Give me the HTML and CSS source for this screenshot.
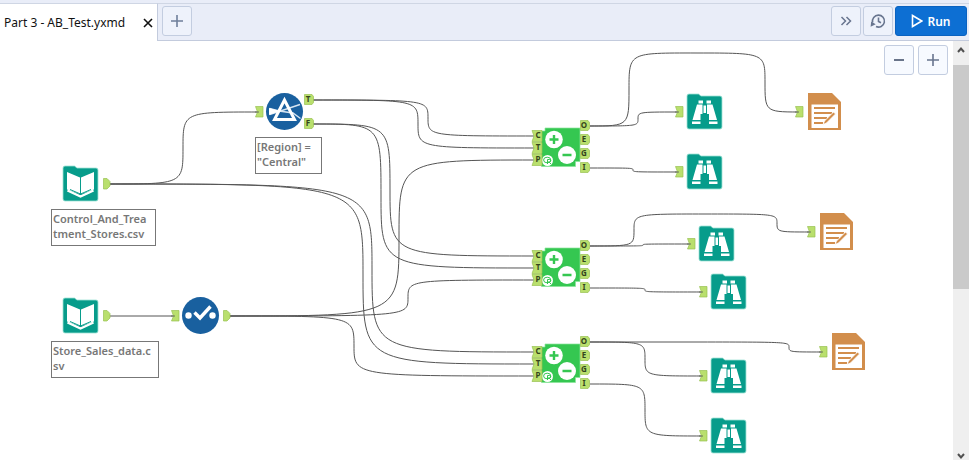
FILE: index.html
```html
<!DOCTYPE html>
<html lang="en">
<head>
<meta charset="utf-8">
<title>Part 3 - AB_Test.yxmd</title>
<link rel="stylesheet" href="styles.css">
</head>
<body>
<header class="bar">
  <div class="tab">
    <span class="tab-name">Part 3 - AB_Test.yxmd</span>
    <button class="close" type="button" aria-label="Close tab"><svg width="10" height="10" viewBox="0 0 10 10"><path d="M1 1L9 9M9 1L1 9" stroke="#111" stroke-width="1.6"/></svg></button>
  </div>
  <div class="tools">
    <button class="btn" type="button" aria-label="New tab"><svg width="14" height="14" viewBox="0 0 14 14"><path d="M7 1V13M1 7H13" stroke="#6f7f9b" stroke-width="1.6"/></svg></button>
    <span class="space"></span>
    <button class="btn" type="button" aria-label="More"><svg width="12" height="10" viewBox="0 0 12 10"><path d="M1.500 1L5.500 5L1.500 9M6.500 1L10.500 5L6.500 9" fill="none" stroke="#68758f" stroke-width="1.5"/></svg></button>
    <button class="btn" type="button" aria-label="History"><svg width="16" height="16" viewBox="0 0 16 16"><path d="M2.600 9.500A6 6 0 1 1 6 13.600M8.500 4.500V8.500L11 9.800" fill="none" stroke="#68758f" stroke-width="1.6"/><path d="M.6 13.700L1.200 8.600L5.700 11.300Z" fill="#68758f"/></svg></button>
    <button class="run" type="button"><svg width="12" height="14" viewBox="0 0 12 14"><path d="M1.500 1.500L10.800 7L1.500 12.500Z" fill="none" stroke="#fff" stroke-width="1.6"/></svg>Run</button>
  </div>
</header>
<div class="work">
  <main class="canvas">
    <svg class="flow" width="953" height="419" viewBox="0 41 953 419">
      <defs>
        <symbol id="in" viewBox="0 0 9 12" overflow="visible"><path d="M.5 .5H8V11H.5L2.500 6Z" fill="#b9df6d" stroke="#98c152" stroke-width=".7"/><path d="M0 6H4" stroke="#68735a"/></symbol>
        <symbol id="out" viewBox="0 0 8 12" overflow="visible"><path d="M.5 .5H4L7 3.500V8L4 11H.5Z" fill="#b9df6d" stroke="#98c152" stroke-width=".7"/></symbol>
        <symbol id="port" viewBox="0 0 10 11"><path d="M.5 .5H8L9.500 2.500V8.500L8 10.500H.5Z" fill="#b9df6d" stroke="#98c152" stroke-width=".7"/></symbol>
        <symbol id="folder" viewBox="0 0 37 37"><path d="M3 1H12.500L15 3H34Q36 3 36 5V34Q36 36 34 36H3Q1 36 1 34V3Q1 1 3 1Z" fill="#079c8b" stroke="#9fe3d6" stroke-width=".8"/></symbol>
        <symbol id="book" viewBox="0 0 37 37"><use href="#folder" width="37" height="37"/><path d="M5 7L18 12.500V29L5 24.500ZM32 7L19 12.500V29L32 24.500Z" fill="#fff"/><path d="M5.500 25.500L18.500 31.500L31.500 25.500" fill="none" stroke="#fff" stroke-width="2.400"/><path d="M8 24.500L18.500 29L29 24.500M18.500 12V29" fill="none" stroke="#079c8b" stroke-width="1"/></symbol>
        <symbol id="browse" viewBox="0 0 37 37"><use href="#folder" width="37" height="37"/><path d="M12.500 7.500H17V10.500H12.500ZM20.500 7.500H25V10.500H20.500ZM11 11.500H16.500V21H14.500V27H6.500ZM21 11.500H26.500L31 27H23V21H21ZM17.500 12.500H20V20H17.500ZM6 28.500H14.500V31H6ZM23 28.500H31.500V31H23Z" fill="#fff"/></symbol>
        <symbol id="report" viewBox="0 0 34 38"><path d="M0 0H24L33 9V37H0Z" fill="#d28e4c"/><path d="M3.500 11.500H30V35H3.500Z" fill="#fff"/><path d="M6 15H27M6 20H24M6 25H19M6 30H15" stroke="#d28e4c" stroke-width="2.200"/><path d="M15 31.500L16.500 28L25.500 19L27.500 21L18.500 30Z" fill="#d28e4c" stroke="#fff" stroke-width=".8"/></symbol>
        <g id="macro">
          <path d="M545 128H580V161.500H575.500V166.500H541.500V131H545Z" fill="#35c751" stroke="#8be59b" stroke-width=".7"/>
          <circle cx="554" cy="139.500" r="8.800" fill="#fff"/><circle cx="567" cy="155" r="9" fill="#fff"/>
          <path d="M549.500 139.500H558.500M554 135V144M562.500 155H571.500" stroke="#35c751" stroke-width="2.400"/>
          <circle cx="547.500" cy="160.500" r="5.500" fill="#fff"/>
          <ellipse cx="547.200" cy="160" rx="3.600" ry="2.800" fill="none" stroke="#35c751"/>
          <path d="M547.500 164V159.500H549.500A1.200 1.200 0 0 1 549.500 162H547.500M549 162L551 164" fill="none" stroke="#35c751"/>
          <g fill="#b9df6d" stroke="#98c152" stroke-width=".7"><path d="M532 130.500H542V141.500H532L534 136Z"/><path d="M532 142.500H542V153.500H532L534 148Z"/><path d="M532 154.500H542V165.500H532L534 160Z"/></g>
          <use href="#port" x="580" y="120" width="10" height="11"/><use href="#port" x="580" y="134" width="10" height="11"/><use href="#port" x="580" y="148" width="10" height="11"/><use href="#port" x="580" y="162" width="10" height="11"/>
        </g>
      </defs>
      <g class="wires">
        <path d="M109 184C183 184 183 184 183 148S183 112 258 112"/>
        <path d="M313 100C428 100 428 100 428 118S428 136 535 136"/>
        <path d="M313 100C418 100 418 100 418 124S418 148 535 148"/>
        <path d="M313 124C390 124 390 124 390 190S390 256 535 256"/>
        <path d="M313 124C381 124 381 124 381 196S381 268 535 268"/>
        <path d="M109 184C372 184 372 184 372 268S372 352 535 352"/>
        <path d="M109 184C363 184 363 184 363 274S363 364 535 364"/>
        <path d="M230 316C399 316 399 316 399 238S399 160 535 160"/>
        <path d="M230 316C408 316 408 316 408 298S408 280 535 280"/>
        <path d="M230 316C354 316 354 316 354 346S354 376 535 376"/>
        <path d="M109 316H174"/>
        <path d="M590 126C638 126 638 126 638 119S638 112 678 112"/>
        <path d="M590 126C629 126 629 126 629 89S629 53 697 53S765 53 765 82S765 112 798 112"/>
        <path d="M590 168C633 168 633 168 633 170S633 172 678 172"/>
        <path d="M590 246C643 246 643 246 643 245S643 244 690 244"/>
        <path d="M590 246C634 246 634 246 634 230S634 214 705 214S777 214 777 223S777 232 810 232"/>
        <path d="M590 288C645 288 645 288 645 290S645 292 702 292"/>
        <path d="M590 342C645 342 645 342 645 359S645 376 702 376"/>
        <path d="M590 342H690C789 342 789 342 789 347S789 352 822 352"/>
        <path d="M590 384C645 384 645 384 645 410S645 436 702 436"/>
      </g>
      <use href="#book" x="62" y="165" width="37" height="37"/><use href="#out" x="103" y="178" width="8" height="12"/>
      <use href="#book" x="62" y="297" width="37" height="37"/><use href="#out" x="103" y="310" width="8" height="12"/>
      <use href="#in" x="255" y="106" width="9" height="12"/>
      <circle cx="284.500" cy="111.500" r="18.500" fill="#19609f"/>
      <path d="M269.500 108.500L279 111L293 113L300.500 118.500M269.500 114.500L279 111.500L300 104.500" fill="none" stroke="#d6e5f2" stroke-width="1.400"/>
      <path d="M269 108L280 111L269 115Z" fill="#fff"/>
      <path d="M284.500 100L274.500 119.500H294.500Z" fill="none" stroke="#fff" stroke-width="3"/>
      <use href="#port" x="304" y="94" width="10" height="11"/><use href="#port" x="304" y="118" width="10" height="11"/>
      <use href="#in" x="171" y="310" width="9" height="12"/>
      <circle cx="200.500" cy="315.500" r="18.500" fill="#19609f"/>
      <circle cx="188.500" cy="315.500" r="3.200" fill="#fff"/><circle cx="212.500" cy="315.500" r="3.200" fill="#fff"/>
      <path d="M194.500 312.500L200 318L210.500 306.500" fill="none" stroke="#fff" stroke-width="3.400"/>
      <use href="#out" x="223" y="310" width="8" height="12"/>
      <use href="#macro"/><use href="#macro" y="120"/><use href="#macro" y="216"/>
      <use href="#in" x="675" y="106" width="9" height="12"/><use href="#browse" x="686" y="93" width="37" height="37"/>
      <use href="#in" x="675" y="166" width="9" height="12"/><use href="#browse" x="686" y="153" width="37" height="37"/>
      <use href="#in" x="687" y="238" width="9" height="12"/><use href="#browse" x="698" y="225" width="37" height="37"/>
      <use href="#in" x="699" y="286" width="9" height="12"/><use href="#browse" x="710" y="273" width="37" height="37"/>
      <use href="#in" x="699" y="370" width="9" height="12"/><use href="#browse" x="710" y="357" width="37" height="37"/>
      <use href="#in" x="699" y="430" width="9" height="12"/><use href="#browse" x="710" y="417" width="37" height="37"/>
      <use href="#in" x="795" y="106" width="9" height="12"/><use href="#report" x="808" y="93" width="34" height="38"/>
      <use href="#in" x="807" y="226" width="9" height="12"/><use href="#report" x="820" y="213" width="34" height="38"/>
      <use href="#in" x="819" y="346" width="9" height="12"/><use href="#report" x="832" y="333" width="34" height="38"/>
      <g class="letters">
        <text x="308" y="102">T</text><text x="308" y="126">F</text>
        <text x="538" y="138">C</text><text x="538" y="150">T</text><text x="538" y="162">P</text>
        <text x="584" y="128">O</text><text x="584" y="142">E</text><text x="584" y="156">G</text><text x="584" y="170">I</text>
        <text x="538" y="258">C</text><text x="538" y="270">T</text><text x="538" y="282">P</text>
        <text x="584" y="248">O</text><text x="584" y="262">E</text><text x="584" y="276">G</text><text x="584" y="290">I</text>
        <text x="538" y="354">C</text><text x="538" y="366">T</text><text x="538" y="378">P</text>
        <text x="584" y="344">O</text><text x="584" y="358">E</text><text x="584" y="372">G</text><text x="584" y="386">I</text>
      </g>
    </svg>
    <div class="note note-stores">Control_And_Trea<br>tment_Stores.csv</div>
    <div class="note note-sales">Store_Sales_data.c<br>sv</div>
    <div class="note note-filter">[Region] =<br>"Central"</div>
    <div class="zoom">
      <button class="btn" type="button" aria-label="Zoom out"><svg width="14" height="14" viewBox="0 0 14 14"><path d="M2 7H12" stroke="#59657d" stroke-width="1.800"/></svg></button>
      <button class="btn" type="button" aria-label="Zoom in"><svg width="14" height="14" viewBox="0 0 14 14"><path d="M7 1V13M1 7H13" stroke="#68758f" stroke-width="1.600"/></svg></button>
    </div>
  </main>
  <div class="scroll">
    <svg width="8" height="24" viewBox="0 0 8 24"><path d="M1 11L4 7.500L7 11" fill="none" stroke="#505050" stroke-width="2"/></svg>
    <div class="thumb"></div>
    <div class="track"></div>
    <svg width="8" height="8" viewBox="0 0 8 8"><path d="M1 2L4 5.500L7 2" fill="none" stroke="#505050" stroke-width="2"/></svg>
  </div>
</div>
</body>
</html>
```
FILE: styles.css
```css
* { box-sizing: border-box; }
body {
  margin: 0;
  height: 100vh;
  display: flex;
  flex-direction: column;
  overflow: hidden;
  background: #fff;
  font-family: "Noto Sans", "Open Sans", sans-serif;
}
button { font-family: inherit; padding: 0; cursor: pointer; }
.bar {
  display: flex;
  height: 41px;
  padding-top: 3px;
  background: #e9edf8;
}
.tab {
  display: flex;
  align-items: center;
  gap: 18px;
  padding: 0 4px;
  background: #fff;
  border-top: 1px solid #cfd6e4;
  border-right: 1px solid #c3cbdd;
}
.tab-name { font-size: 12px; color: #111; white-space: nowrap; }
.close { display: flex; border: 0; background: none; }
.tools {
  flex: 1;
  display: flex;
  gap: 2px;
  padding: 2px 2px 0 4px;
  border-top: 1px solid #cfd6e4;
  border-bottom: 1px solid #c3cbdd;
}
.space { flex: 1; }
.btn {
  display: flex;
  align-items: center;
  justify-content: center;
  width: 30px;
  height: 30px;
  border: 1px solid #c3cde0;
  border-radius: 3px;
  background: #eef2fb;
}
.run {
  display: flex;
  align-items: center;
  justify-content: center;
  gap: 4px;
  width: 72px;
  height: 30px;
  border: 1px solid #0a62c0;
  border-radius: 3px;
  background: #0d6fd3;
  color: #fff;
  font-size: 12px;
  font-weight: 600;
}
.work { flex: 1; display: flex; min-height: 0; }
.canvas { position: relative; flex: 1; overflow: hidden; }
.flow { display: block; }
.wires { fill: none; stroke: #555; stroke-width: 1; }
.letters {
  font-size: 8px;
  font-weight: 700;
  fill: #34441c;
  text-anchor: middle;
}
.note {
  position: absolute;
  padding: 1px;
  border: 1px solid #777;
  background: #fff;
  color: #777;
  font-size: 11px;
  font-weight: 600;
  line-height: 15px;
  white-space: nowrap;
}
.note-stores { left: 51px; top: 168px; width: 105px; height: 37px; }
.note-sales { left: 51px; top: 300px; width: 108px; height: 37px; }
.note-filter { left: 255px; top: 96px; width: 67px; height: 37px; }
.zoom {
  position: absolute;
  top: 4px;
  right: 5px;
  display: flex;
  gap: 4px;
}
.zoom .btn { background: #f7faff; }
.scroll {
  display: flex;
  flex-direction: column;
  align-items: center;
  width: 16px;
  background: #efefef;
}
.thumb { width: 100%; flex: 224; background: #cacaca; }
.track { flex: 163; }
```
